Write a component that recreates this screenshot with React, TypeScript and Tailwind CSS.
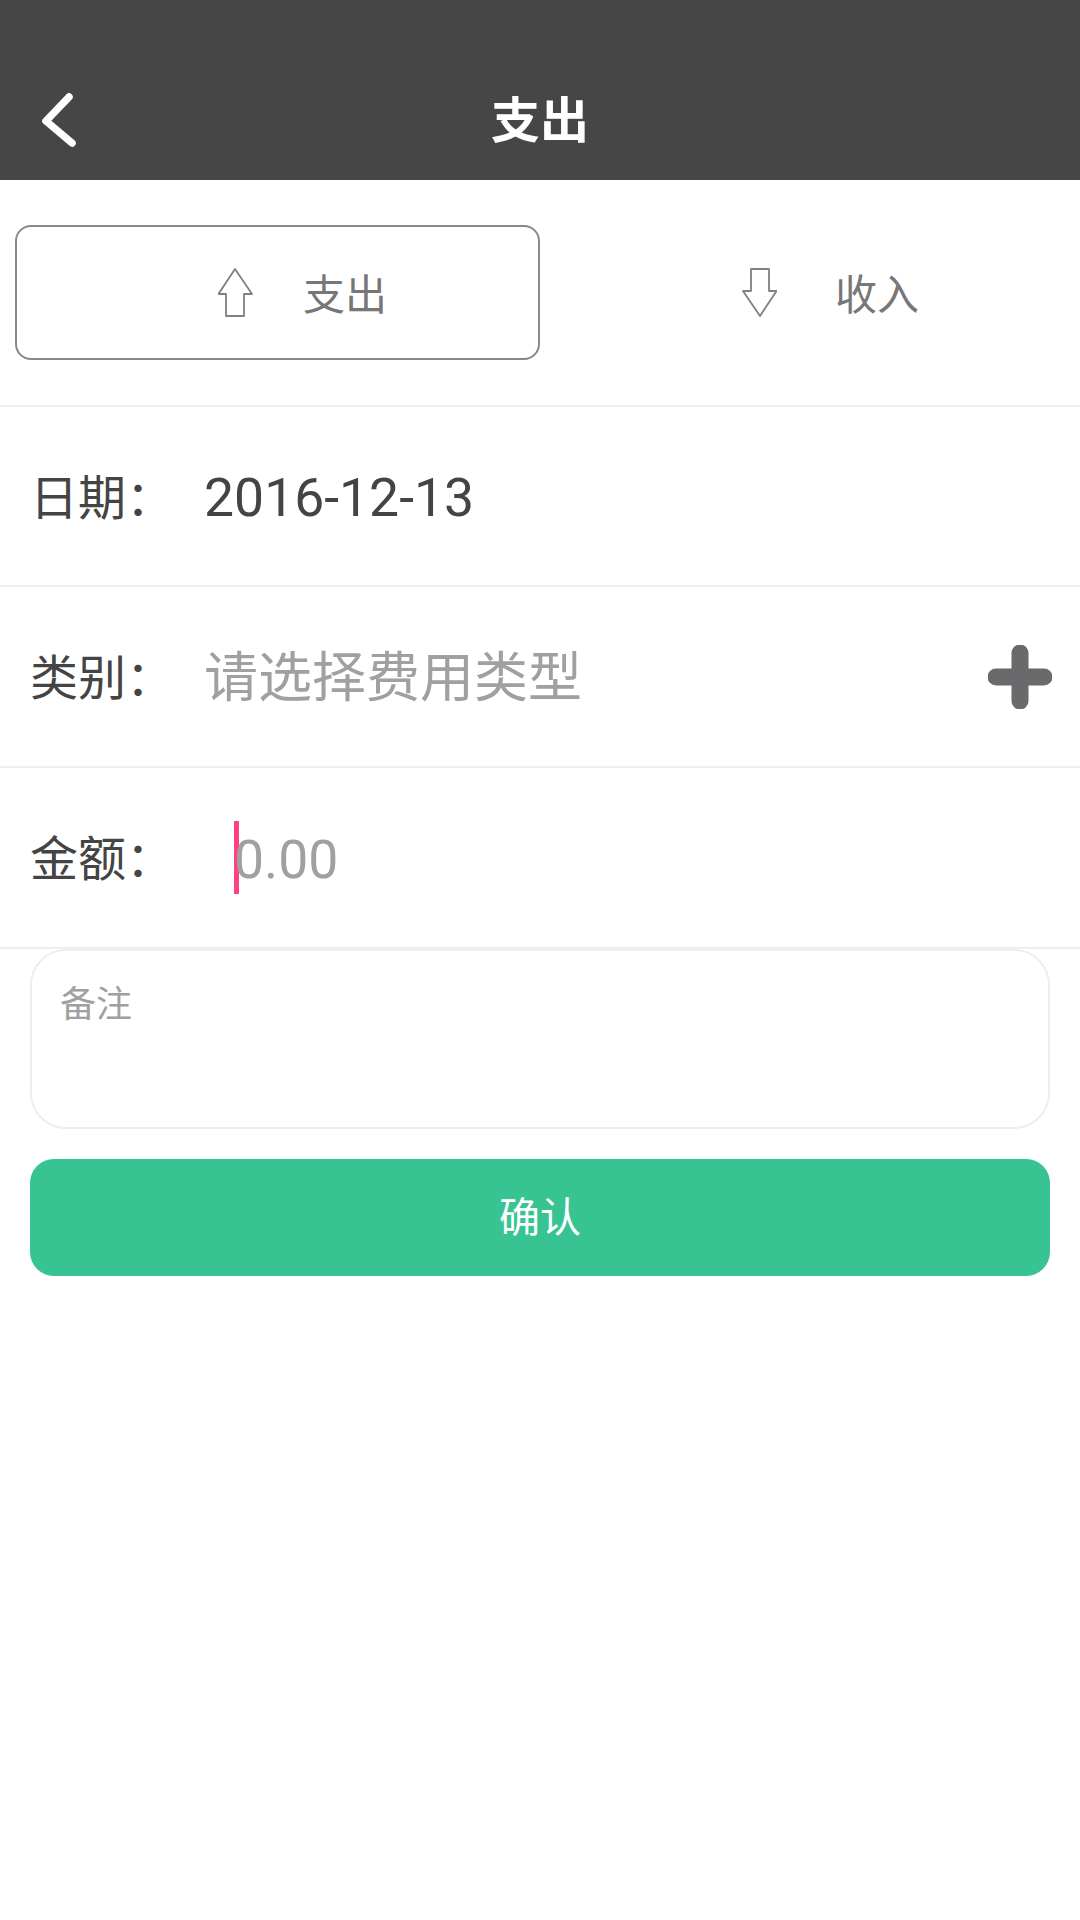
import React from 'react';

const FONT = "font-['Roboto','Noto_Sans_CJK_SC',sans-serif]";

function BackIcon() {
  return (
    <svg width="44" height="64" viewBox="0 0 44 64" fill="none">
      <path d="M30 8 L7 32 L33 54" stroke="#fff" strokeWidth="7.5" strokeLinecap="round" strokeLinejoin="round" />
    </svg>
  );
}

function ArrowIcon({ down }: { down?: boolean }) {
  return (
    <svg width="36" height="50" viewBox="0 0 36 50" fill="none" className={down ? 'rotate-180' : ''}>
      <path
        d="M17 1 L34 26 H26 V48 H8 V26 H0.5 Z"
        fill="#fff"
        stroke="#808080"
        strokeWidth="1.8"
        strokeLinejoin="round"
      />
    </svg>
  );
}

function PlusIcon() {
  return (
    <svg width="64" height="64" viewBox="0 0 64 64">
      <path d="M32 8 V56 M8 32 H56" stroke="#6a6a6c" strokeWidth="17" strokeLinecap="round" />
    </svg>
  );
}

function Row({ label, h, children }: { label: string; h: string; children: React.ReactNode }) {
  return (
    <div className={`flex ${h} items-center border-b-2 border-[#eeeeee] pl-[30px]`}>
      <div className="w-[174px] shrink-0 pt-[5px] text-[48px] text-[#444444]">{label}：</div>
      {children}
    </div>
  );
}

export default function App() {
  return (
    <div className={`${FONT} min-h-[1920px] w-[1080px] bg-white`}>
      {/* Header */}
      <div className="flex h-[180px] items-center justify-between bg-[#464646] pl-[39px] pr-[39px] pt-[60px]">
        <div className="pt-[1px]">
          <BackIcon />
        </div>
        <div className="pt-[3px] text-[49px] font-bold text-white">支出</div>
        <div className="w-[44px]" />
      </div>

      {/* Type switch */}
      <div className="flex h-[227px] items-center border-b-2 border-[#eeeeee] pl-[15px]">
        <div className="flex h-[135px] w-[525px] items-center gap-[49px] rounded-[16px] border-2 border-[#888888] pl-[201px]">
          <ArrowIcon />
          <span className="pt-[5px] text-[42px] text-[#777777]">支出</span>
        </div>
        <div className="flex h-[134px] w-[525px] items-center gap-[58px] pb-[2px] pl-[201px]">
          <ArrowIcon down />
          <span className="pt-[7px] text-[42px] text-[#777777]">收入</span>
        </div>
      </div>

      <Row label="日期" h="h-[180px]">
        <div className="pt-[5px] text-[53.5px] text-[#444444]">2016-12-13</div>
      </Row>
      <Row label="类别" h="h-[181px]">
        <div className="flex-1 pt-[3px] text-[54px] text-[#a0a0a0]">请选择费用类型</div>
        <div className="mr-[28px]">
          <PlusIcon />
        </div>
      </Row>
      <Row label="金额" h="h-[181px]">
        <div className="ml-[30px] h-[73px] w-[5px] bg-[#ff4081]" />
        <div className="-ml-[5px] pt-[5px] text-[53.5px] text-[#a0a0a0]">0.00</div>
      </Row>

      {/* Remark */}
      <div className="mx-[30px] h-[180px] rounded-[36px] border-2 border-[#eeeeee] px-[28px] pt-[27px] text-[36px] text-[#a0a0a0]">
        备注
      </div>

      <div className="mx-[30px] mt-[30px] flex h-[117px] items-center justify-center rounded-[24px] bg-[#38c492] pt-[3px] text-[41px] text-white">
        确认
      </div>
    </div>
  );
}
